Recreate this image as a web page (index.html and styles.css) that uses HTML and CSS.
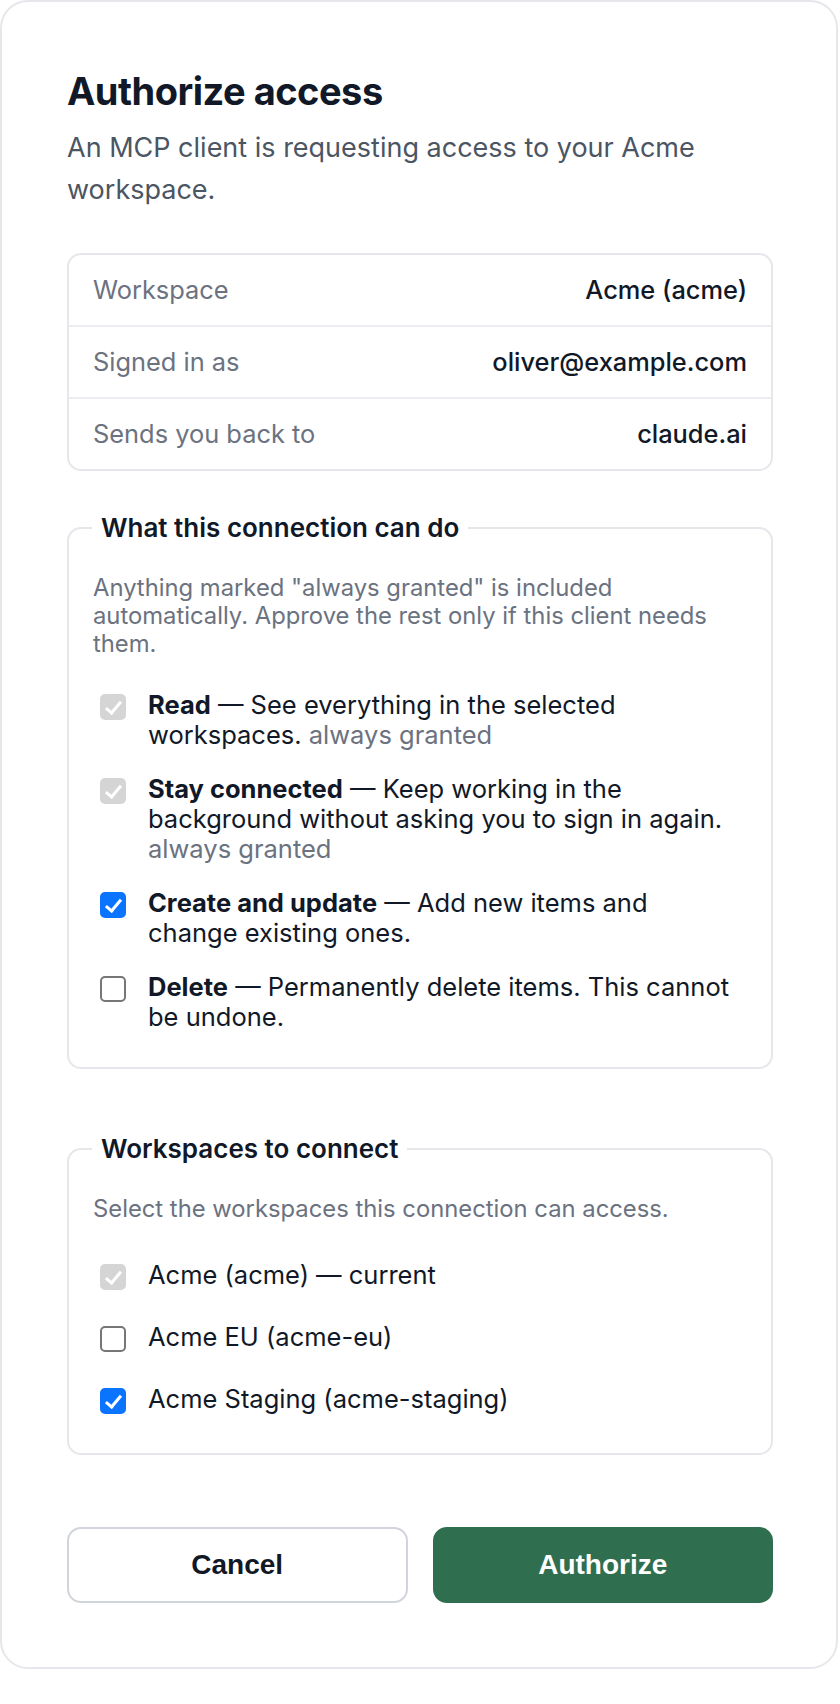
FILE: index.html
```html
<!DOCTYPE html>
<html>
	<head>
		<meta charset="utf-8">
		<meta name="viewport" content="width=device-width,initial-scale=1.0">
		<title>Authorize access</title>
		<link rel="stylesheet" href="styles.css">
	</head>
	<body>
		<div class="card">
			<h1 class="title">Authorize access</h1>
			<p class="lead">An MCP client is requesting access to your Acme workspace.</p>

			<dl class="details">
				<div class="row"><dt>Workspace</dt><dd>Acme (acme)</dd></div>
				<div class="row"><dt>Signed in as</dt><dd>oliver@example.com</dd></div>
				<div class="row"><dt>Sends you back to</dt><dd>claude.ai</dd></div>
			</dl>

			<fieldset class="group scopes">
				<legend>What this connection can do</legend>
				<p class="hint">Anything marked "always granted" is included automatically. Approve the rest only if this client needs them.</p>
				<label class="option">
					<input type="checkbox" checked disabled>
					<span class="text"><strong>Read</strong> — See everything in the selected workspaces. <span class="granted">always granted</span></span>
				</label>
				<label class="option">
					<input type="checkbox" checked disabled>
					<span class="text"><strong>Stay connected</strong> — Keep working in the background without asking you to sign in again. <span class="granted">always granted</span></span>
				</label>
				<label class="option">
					<input type="checkbox" checked>
					<span class="text"><strong>Create and update</strong> — Add new items and change existing ones.</span>
				</label>
				<label class="option">
					<input type="checkbox">
					<span class="text"><strong>Delete</strong> — Permanently delete items. This cannot be undone.</span>
				</label>
			</fieldset>

			<fieldset class="group workspaces">
				<legend>Workspaces to connect</legend>
				<p class="hint">Select the workspaces this connection can access.</p>
				<label class="option">
					<input type="checkbox" checked disabled>
					<span class="text">Acme (acme) — current</span>
				</label>
				<label class="option">
					<input type="checkbox">
					<span class="text">Acme EU (acme-eu)</span>
				</label>
				<label class="option">
					<input type="checkbox" checked>
					<span class="text">Acme Staging (acme-staging)</span>
				</label>
			</fieldset>

			<div class="actions">
				<button class="btn cancel" type="button">Cancel</button>
				<button class="btn authorize" type="submit">Authorize</button>
			</div>
		</div>
	</body>
</html>
```

FILE: styles.css
```css
*{
	margin: 0;
	padding: 0;
	box-sizing: border-box;
}
body{
	background: #fff;
	font-family: Inter, "Noto Sans", "Liberation Sans", sans-serif;
	color: #111827;
}
.card{
	width: 838px;
	border: 2px solid #e5e7eb;
	border-radius: 28px;
	padding: 66px 63px 64px 65px;
}
.title{
	font-size: 38px;
	line-height: 46px;
	font-weight: 700;
	letter-spacing: -0.5px;
	color: #111827;
}
.lead{
	margin-top: 13px;
	font-size: 27px;
	line-height: 42px;
	color: #4b5563;
}

/* summary box */
.details{
	margin-top: 42px;
	border: 2px solid #e5e7eb;
	border-radius: 14px;
}
.details .row{
	display: flex;
	justify-content: space-between;
	padding: 17px 24px;
	font-size: 25.4px;
	line-height: 36px;
}
.details .row + .row{
	border-top: 2px solid #eceef1;
}
.details dt{
	color: #6b7280;
}
.details dd{
	color: #111827;
	font-weight: 500;
}

/* checkbox groups */
.group{
	border: 2px solid #e5e7eb;
	border-radius: 14px;
	padding: 31px 24px 35px 24px;
	margin-top: 41px;
}
.group.workspaces{
	margin-top: 64px;
}
.group legend{
	margin-left: -1px;
	padding: 0 9px;
	font-size: 26px;
	line-height: 31px;
	font-weight: 600;
	color: #111827;
}
.hint{
	font-size: 23.8px;
	line-height: 28px;
	color: #6b7280;
}
.option{
	display: flex;
	align-items: flex-start;
	gap: 22px;
	font-size: 25.5px;
	line-height: 30px;
	color: #111827;
	cursor: pointer;
}
.scopes .option{
	margin-top: 24px;
}
.scopes .hint + .option{
	margin-top: 32px;
}
.scopes .option .text{
	max-width: 586px;
}
.workspaces .option{
	padding: 4px 0;
	margin-top: 24px;
}
.workspaces .hint + .option{
	margin-top: 33px;
}
.option strong{
	font-weight: 700;
}
.granted{
	color: #6b7280;
}

.option input{
	appearance: none;
	-webkit-appearance: none;
	position: relative;
	flex: none;
	width: 26px;
	height: 26px;
	margin: 4px 0 0 7px;
	border: 2px solid #767676;
	border-radius: 5px;
	background: #fff;
}
.option input:checked{
	background: #0a74ff;
	border-color: #0a74ff;
}
.option input:checked:disabled{
	background: #d5d5d5;
	border-color: #d5d5d5;
}
.option input:checked::after{
	content: '';
	position: absolute;
	left: 7px;
	top: 2px;
	width: 6px;
	height: 13px;
	border: solid #fff;
	border-width: 0 3.5px 3.5px 0;
	transform: rotate(40deg);
}

/* buttons */
.actions{
	display: flex;
	gap: 25px;
	margin-top: 72px;
}
.btn{
	flex: 1;
	height: 76px;
	border-radius: 14px;
	font-family: "Liberation Sans", Arial, sans-serif;
	font-size: 28px;
	font-weight: 700;
	cursor: pointer;
}
.cancel{
	background: #fff;
	border: 2px solid #d1d5db;
	color: #111827;
}
.authorize{
	background: #2f6f50;
	border: 2px solid #2f6f50;
	color: #fff;
}
```
